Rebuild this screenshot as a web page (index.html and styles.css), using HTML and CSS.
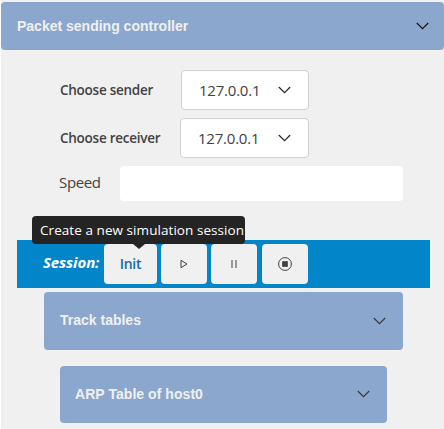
FILE: index.html
```html
<!DOCTYPE html>
<html lang="en">
<head>
<meta charset="utf-8">
<title>Packet sending controller</title>
<link rel="stylesheet" href="styles.css">
</head>
<body>
<main class="panel">
  <header class="bar bar-main"><span class="title-main">Packet sending controller</span>
    <svg class="chevron" viewBox="0 0 13 8"><path d="M.8 1l5.7 5.7L12.2 1"/></svg></header>
  <section class="form">
    <div class="row"><label class="label sender">Choose sender</label>
      <div class="select select-sender"><span class="ip">127.0.0.1</span><svg class="chevron" viewBox="0 0 13 8"><path d="M.8 1l5.7 5.7L12.2 1"/></svg></div></div>
    <div class="row"><label class="label receiver">Choose receiver</label>
      <div class="select"><span class="ip">127.0.0.1</span><svg class="chevron" viewBox="0 0 13 8"><path d="M.8 1l5.7 5.7L12.2 1"/></svg></div></div>
    <div class="row speed-row"><label class="speed" for="speed">Speed</label><input id="speed" class="input" type="text"></div>
  </section>
  <section class="session">
    <span class="session-label">Session:</span>
    <button class="btn init"><span class="init-text">Init</span><span class="tooltip"><span class="tip-text">Create a new simulation session</span></span></button>
    <button class="btn" aria-label="Start"><svg width="8" height="10" viewBox="0 0 8 10"><path d="M1 1.3v7.4L7 5z"/></svg></button>
    <button class="btn" aria-label="Pause"><svg width="6" height="8" viewBox="0 0 6 8"><path d="M1 0v8M5 0v8"/></svg></button>
    <button class="btn stop" aria-label="Stop"><svg width="14" height="14" viewBox="0 0 14 14"><circle cx="7" cy="7" r="6.4"/><rect class="solid" x="4.7" y="4.7" width="4.6" height="4.6"/></svg></button>
  </section>
  <section class="bar bar-track"><span class="title-track">Track tables</span>
    <svg class="chevron soft" viewBox="0 0 13 8"><path d="M.8 1l5.7 5.7L12.2 1"/></svg></section>
  <section class="bar bar-arp"><span class="title-arp">ARP Table of host0</span>
    <svg class="chevron soft" viewBox="0 0 13 8"><path d="M.8 1l5.7 5.7L12.2 1"/></svg></section>
</main>
</body>
</html>
```
FILE: styles.css
```css
* { box-sizing: border-box; }
body { margin: 0; background: #fff; font-family: "Open Sans", "Noto Sans", sans-serif; color: #424242; overflow: hidden; }
.panel { margin-left: 1px; height: 429px; padding-top: 2px; background: #f0f0f0; }
.bar { display: flex; align-items: center; justify-content: space-between; background: #8ca7cd; border-radius: 4px; color: #f0f0f0; font: bold 14px "Liberation Sans", Arial, sans-serif; }
.bar span, .label, .speed, .ip, .session-label, .init-text, .tip-text { white-space: nowrap; }
.bar-main { height: 48px; padding: 0 15px 0 16px; }
.title-main { letter-spacing: 0; }
.bar-track { height: 58px; margin: 4px 41px 0 43px; padding: 0 17px 0 16px; }
.title-track { padding-bottom: 2px; }
.bar-arp { height: 57px; margin: 16px 57px 0 59px; padding: 0 17px 0 15px; }
.title-arp { padding-bottom: 1px; letter-spacing: .05px; }
.chevron { display: block; width: 13px; height: 8px; flex: none; fill: none; stroke: #111; stroke-width: 1.15; }
.bar-main .chevron { margin-bottom: 1px; }
.chevron.soft { stroke: #383838; margin-bottom: 1px; }
.form { padding: 20px 40px 0 59px; }
.row { display: flex; align-items: center; height: 40px; margin-bottom: 8px; }
.label { width: 120px; font-size: 13.5px; font-weight: 600; letter-spacing: -.26px; }
.select { display: flex; align-items: center; justify-content: space-between; width: 129px; height: 40px; padding: 0 17px; background: #fff; border: 1px solid #d1d1d1; border-radius: 4px; font-size: 15px; }
.ip { letter-spacing: -.22px; }
.select .chevron { stroke: #242424; }
.select-sender { width: 128px; margin-left: 1px; }
.speed-row { height: 35px; margin-bottom: 39px; }
.speed { width: 60px; font-size: 15px; letter-spacing: -.35px; margin-left: -1px; margin-right: 1px; padding-bottom: 3px; }
.input { width: 283px; height: 35px; border: 0; border-radius: 4px; background: #fff; }
.session { display: flex; align-items: center; gap: 4px; height: 48px; margin: 0 14px 0 16px; padding-left: 26px; background: #0285c9; }
.session-label { width: 57px; padding-bottom: 4px; color: #fff; font-size: 15px; font-weight: 700; font-style: italic; letter-spacing: -.1px; }
.btn { position: relative; display: flex; align-items: center; justify-content: center; width: 46px; height: 40px; padding: 0; border: 0; border-radius: 4px; background: #f0f0f0; font: 600 14px "Open Sans", sans-serif; }
.btn svg { fill: none; stroke: #424242; stroke-width: 1; }
.btn .solid { fill: #424242; }
.init { width: 53px; color: #17689f; }
.init-text { letter-spacing: -.3px; padding-bottom: 1px; }
.stop { margin-left: 1px; }
.tooltip { position: absolute; left: -72px; top: -28px; width: 213px; height: 28px; display: flex; align-items: center; padding: 0 0 1px 8px; border-radius: 4px; background: #242424; color: #fff; font-size: 13.5px; font-weight: 400; letter-spacing: .06px; }
.tooltip::after { content: ""; position: absolute; left: 101px; top: 28px; border: 6px solid transparent; border-top: 5px solid #242424; border-bottom: 0; }
```
